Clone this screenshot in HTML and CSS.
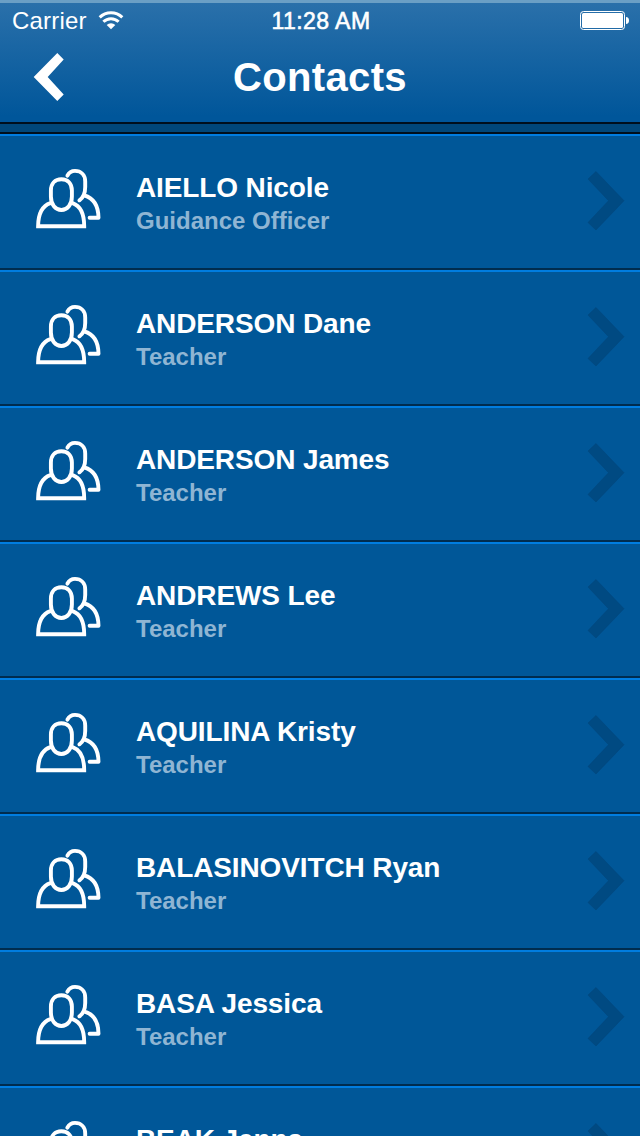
FILE: index.html
```
<!DOCTYPE html>
<html lang="en">
<head>
<meta charset="utf-8">
<title>Contacts</title>
<link rel="stylesheet" href="styles.css">
</head>
<body>
<svg class="defs" aria-hidden="true">
  <symbol id="people" viewBox="0 0 72 68">
    <g fill="none" stroke="#fff" stroke-width="3.9" stroke-linecap="round" stroke-linejoin="round">
      <path d="M29.400 14.200C23 14.200 18.900 18.500 18.900 25.500v6c0 8 4.500 13.500 10.500 13.500s10.500-5.500 10.500-13.500v-6c0-7-4.100-11.300-10.500-11.300z"/>
      <path stroke-linejoin="miter" d="M18.400 38.200C10 41 6.200 49.500 6.100 61.300H52.200C52.200 49.500 48.500 41 40.600 38.200"/>
      <path d="M35.4 10.700C37 7.500 39.800 5.900 43 5.900 49 5.900 53.200 10 53.200 16.500V22C53.200 28 51.500 32.500 47.400 35.300M52.300 30.300C61.500 33 66.400 41 66.500 52.800H57.600"/>
    </g>
  </symbol>
  <symbol id="next" viewBox="0 0 40 62">
    <path d="M10 1.500 38 30.700 10 60 2 52.500 22.500 30.700 2 9z" fill="#004a82" stroke="#00457b" stroke-opacity=".5" stroke-width="1"/>
  </symbol>
</svg>
<div class="screen">
  <header class="header">
    <div class="status">
      <div class="carrier"><span class="carrier-name">Carrier</span>
        <svg class="wifi" width="26" height="20" viewBox="0 0 26 20">
          <g fill="none" stroke="#fff" stroke-width="3">
            <path d="M1.700 7.400a16 16 0 0 1 22.600 0"/>
            <path d="M5.400 11.800a10.800 10.800 0 0 1 15.200 0"/>
          </g>
          <path d="M13 19.200 8.700 14.900a6.100 6.100 0 0 1 8.600 0z" fill="#fff"/>
        </svg>
      </div>
      <time class="time">11:28 AM</time>
      <svg class="battery" width="50" height="20" viewBox="0 0 50 20">
        <rect x=".5" y=".5" width="44" height="18" rx="3" fill="none" stroke="#fff"/>
        <rect x="2" y="2" width="41" height="15" rx="1.500" fill="#fff"/>
        <path d="M46 6c2 0 3 1.500 3 3.500S48 13 46 13z" fill="#fff"/>
      </svg>
    </div>
    <nav class="nav">
      <svg class="back" width="32" height="50" viewBox="0 0 32 50"><path d="M25.300 1 31.700 7.500 15.700 25 31.700 42.500 25.300 49 1.700 25z" fill="#fff"/></svg>
      <h1 class="title">Contacts</h1>
    </nav>
  </header>
  <div class="divider"></div>
  <main class="list">
    <article class="row"><svg class="people"><use href="#people"/></svg><div class="info"><div class="name">AIELLO Nicole</div><div class="role">Guidance Officer</div></div><svg class="next"><use href="#next"/></svg></article>
    <article class="row"><svg class="people"><use href="#people"/></svg><div class="info"><div class="name">ANDERSON Dane</div><div class="role">Teacher</div></div><svg class="next"><use href="#next"/></svg></article>
    <article class="row"><svg class="people"><use href="#people"/></svg><div class="info"><div class="name">ANDERSON James</div><div class="role">Teacher</div></div><svg class="next"><use href="#next"/></svg></article>
    <article class="row"><svg class="people"><use href="#people"/></svg><div class="info"><div class="name">ANDREWS Lee</div><div class="role">Teacher</div></div><svg class="next"><use href="#next"/></svg></article>
    <article class="row"><svg class="people"><use href="#people"/></svg><div class="info"><div class="name">AQUILINA Kristy</div><div class="role">Teacher</div></div><svg class="next"><use href="#next"/></svg></article>
    <article class="row"><svg class="people"><use href="#people"/></svg><div class="info"><div class="name">BALASINOVITCH Ryan</div><div class="role">Teacher</div></div><svg class="next"><use href="#next"/></svg></article>
    <article class="row"><svg class="people"><use href="#people"/></svg><div class="info"><div class="name">BASA Jessica</div><div class="role">Teacher</div></div><svg class="next"><use href="#next"/></svg></article>
    <article class="row"><svg class="people"><use href="#people"/></svg><div class="info"><div class="name">BEAK Jenna</div></div><svg class="next"><use href="#next"/></svg></article>
  </main>
</div>
</body>
</html>
```
FILE: styles.css
```
* { box-sizing: border-box; }
body { margin: 0; background: #005798; font-family: "Liberation Sans", Arial, sans-serif; color: #fff; }
.defs { display: none; }
.screen { width: 640px; height: 1136px; overflow: hidden; }
.header { height: 122px; border-top: 3px solid #6b9fc5; background: linear-gradient(#2a70aa, #00569a 95%); }
.status { height: 37px; display: grid; grid-template-columns: 1fr auto 1fr; align-items: start; padding: 0 10px 0 12px; }
.carrier { display: flex; padding-top: 4px; }
.carrier-name { width: 75px; font-size: 24px; line-height: 28px; letter-spacing: .2px; white-space: nowrap; }
.wifi { margin: 3px 0 0 11px; }
.time { padding-top: 4px; font-size: 23px; line-height: 28px; letter-spacing: .45px; -webkit-text-stroke: .6px #fff; }
.battery { justify-self: end; margin-top: 8px; }
.nav { display: grid; grid-template-columns: 1fr auto 1fr; padding-left: 32px; padding-right: 32px; }
.back { margin-top: 12px; }
.title { margin: 13px 0 0; font-size: 40px; line-height: 48px; font-weight: bold; letter-spacing: .35px; }
.divider { height: 12px; background: #00477a; border-top: 2px solid #000f1c; border-bottom: 2px solid #000f1c; }
.row { height: 136px; display: flex; align-items: flex-start; padding: 0 14px 0 32px; border-top: 2px solid #007de0; border-bottom: 2px solid #002c4e; background: #005798; }
.people { width: 72px; height: 68px; margin-top: 29px; flex: none; }
.info { flex: 1; padding: 35px 0 0 32px; white-space: nowrap; }
.name { font-size: 28px; line-height: 34px; font-weight: bold; letter-spacing: -.12px; }
.role { font-size: 24px; line-height: 32px; font-weight: bold; color: #8fb5d3; }
.next { width: 40px; height: 62px; margin-top: 34px; flex: none; }
```
